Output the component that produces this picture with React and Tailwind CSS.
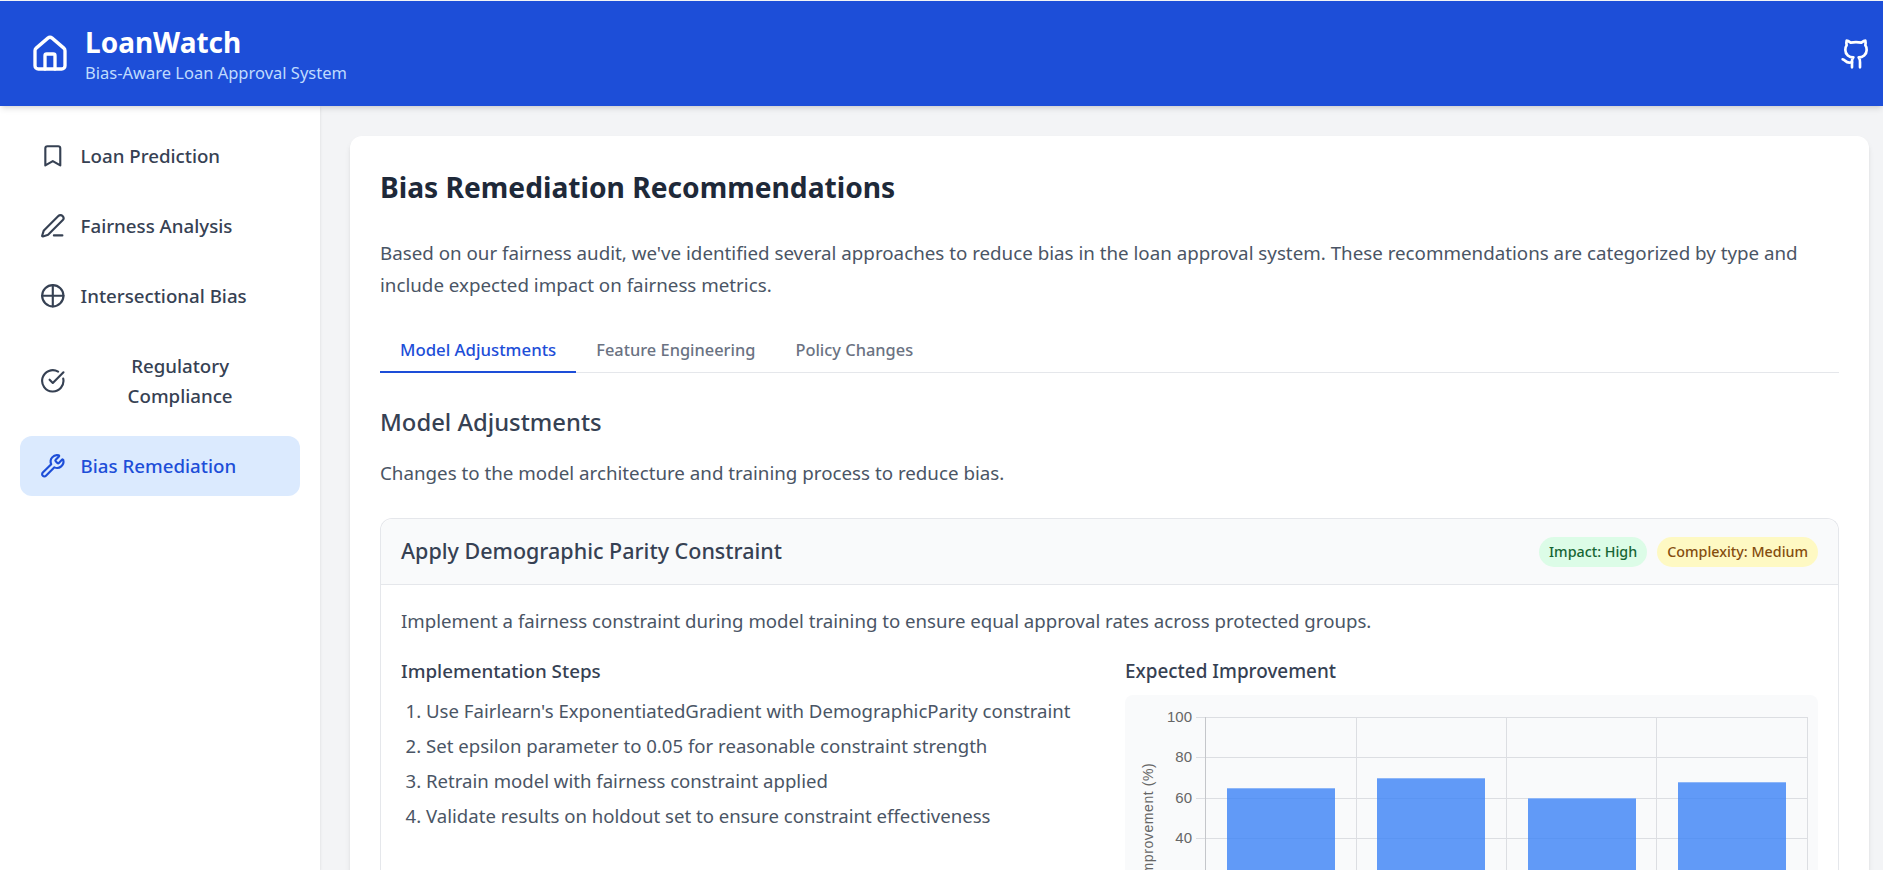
import React from 'react';
import { House, Github, Bookmark, PenLine, CircleCheckBig, Wrench } from 'lucide-react';

const navItems = [
  { label: 'Loan Prediction', icon: Bookmark },
  { label: 'Fairness Analysis', icon: PenLine },
  { label: 'Intersectional Bias', icon: CrossCircle },
  { label: 'Regulatory Compliance', icon: CircleCheckBig, wrap: true },
  { label: 'Bias Remediation', icon: Wrench, active: true },
];

const steps = [
  "Use Fairlearn's ExponentiatedGradient with DemographicParity constraint",
  'Set epsilon parameter to 0.05 for reasonable constraint strength',
  'Retrain model with fairness constraint applied',
  'Validate results on holdout set to ensure constraint effectiveness',
];

function CrossCircle({ size = 24, className }) {
  return (
    <svg width={size} height={size} viewBox="0 0 24 24" fill="none" stroke="currentColor" strokeWidth="2" strokeLinecap="round" strokeLinejoin="round" className={className}>
      <circle cx="12" cy="12" r="10" />
      <line x1="2" y1="12" x2="22" y2="12" />
      <line x1="12" y1="2" x2="12" y2="22" />
    </svg>
  );
}

function ImprovementChart() {
  const ticks = [
    { label: '100', y: 22 },
    { label: '80', y: 62 },
    { label: '60', y: 103 },
    { label: '40', y: 143 },
  ];
  const bars = [
    { x: 102, y: 93 },
    { x: 252, y: 83 },
    { x: 403, y: 103 },
    { x: 553, y: 87 },
  ];
  return (
    <svg width="693" height="240" viewBox="0 0 693 240" className="block">
      {ticks.map((t) => (
        <g key={t.label}>
          <line x1="71" x2="682" y1={t.y + 0.5} y2={t.y + 0.5} stroke="#dcdee2" />
          <text x="67" y={t.y + 5} textAnchor="end" fontSize="15" fill="#666" fontFamily="Liberation Sans, sans-serif">{t.label}</text>
        </g>
      ))}
      {[231, 381, 531, 682].map((x) => (
        <line key={x} x1={x + 0.5} x2={x + 0.5} y1="22" y2="224" stroke="#dcdee2" />
      ))}
      <line x1="80.5" x2="80.5" y1="22" y2="224" stroke="#c4c6ca" />
      {bars.map((b) => (
        <g key={b.x}>
          <rect x={b.x} y={b.y} width="108" height={224 - b.y} fill="#3b82f6" fillOpacity="0.8" />
          <rect x={b.x} y={b.y} width="108" height="1" fill="#8db6f8" />
        </g>
      ))}
      <text transform="translate(28 184) rotate(-90)" fontSize="14" fill="#666" letterSpacing="0.6" fontFamily="Liberation Sans, sans-serif">Improvement (%)</text>
    </svg>
  );
}

export default function App() {
  return (
    <div className="h-[870px] overflow-hidden bg-gray-100 font-['Noto_Sans',sans-serif] text-gray-700">
      <header className="relative z-10 mt-px flex h-[105px] items-center justify-between bg-[#1d4ed8] pl-[30px] pr-[11px] text-white shadow-md">
        <div className="flex items-center gap-[15px]">
          <House size={40} />
          <div>
            <h1 className="text-[28px] leading-[38px] font-bold">LoanWatch</h1>
            <p className="text-[16.5px] leading-[24px] text-[#bfdbfe]">Bias-Aware Loan Approval System</p>
          </div>
        </div>
        <Github size={32} />
      </header>

      <div className="flex">
        <aside className="flex h-[764px] w-[320px] shrink-0 flex-col gap-[10px] bg-white px-5 pt-[20px] shadow-sm">
          {navItems.map(({ label, icon: Icon, active, wrap }) => (
            <div
              key={label}
              className={`flex items-center gap-[15px] rounded-xl px-[20px] py-[15px] text-[18.7px] leading-[30px] font-medium ${active ? 'bg-[#dbeafe] text-[#1d4ed8]' : 'text-gray-700'}`}
            >
              <Icon size={25.6} className="shrink-0" strokeWidth={2} />
              {wrap ? (
                <span className="w-[199px] text-center">Regulatory<br />Compliance</span>
              ) : (
                <span>{label}</span>
              )}
            </div>
          ))}
        </aside>

        <main className="min-w-0 flex-1 pt-[30px] pl-[30px] pr-[14px]">
          <section className="rounded-t-xl bg-white px-[30px] pt-[30px] shadow-md">
            <h2 className="text-[28.2px] leading-[42px] font-bold text-gray-800">Bias Remediation Recommendations</h2>
            <p className="mt-[29px] text-[18.75px] leading-[32px] text-gray-600">
              Based on our fairness audit, we've identified several approaches to reduce bias in the loan approval system. These recommendations are categorized by type and include expected impact on fairness metrics.
            </p>

            <div className="mt-[31px] flex border-b border-gray-200 text-[16.4px] font-medium">
              <div className="-mb-px border-b-2 border-[#1d4ed8] px-5 pt-[3px] pb-[6px] text-[16.8px] leading-[30px] text-[#1d4ed8]">Model Adjustments</div>
              <div className="px-5 pt-[3px] pb-[6px] leading-[30px] text-gray-500">Feature Engineering</div>
              <div className="px-5 pt-[3px] pb-[6px] leading-[30px] text-gray-500">Policy Changes</div>
            </div>

            <h3 className="mt-[32px] text-[23.8px] leading-[34px] font-medium text-gray-700">Model Adjustments</h3>
            <p className="mt-[19px] text-[18.75px] leading-[30px] text-gray-600">Changes to the model architecture and training process to reduce bias.</p>

            <div className="mt-[30px] rounded-t-xl border border-b-0 border-gray-200">
              <div className="flex h-[66px] items-center justify-between rounded-t-xl border-b border-gray-200 bg-gray-50 px-5">
                <h4 className="text-[21.5px] font-medium text-gray-700">Apply Demographic Parity Constraint</h4>
                <div className="flex gap-[10px] text-[14.3px] font-medium">
                  <span className="rounded-full bg-[#dcfce7] px-[10px] py-[5px] leading-[20px] text-[#166534]">Impact: High</span>
                  <span className="rounded-full bg-[#fef9c3] px-[10px] py-[5px] leading-[20px] text-[#854d0e]">Complexity: Medium</span>
                </div>
              </div>

              <div className="px-5 pt-[21px]">
                <p className="text-[18.65px] leading-[30px] text-gray-600">Implement a fairness constraint during model training to ensure equal approval rates across protected groups.</p>
                <div className="mt-[20px] flex gap-[30px]">
                  <div className="w-[694px] shrink-0">
                    <h5 className="text-[18.8px] leading-[30px] font-medium text-gray-700">Implementation Steps</h5>
                    <ol className="mt-[7px] list-decimal pl-[25px] text-[18.6px] leading-[35px] text-gray-600">
                      {steps.map((step) => (
                        <li key={step}>{step}</li>
                      ))}
                    </ol>
                  </div>
                  <div className="min-w-0 flex-1">
                    <h5 className="text-[18.9px] leading-[30px] font-medium text-gray-700">Expected Improvement</h5>
                    <div className="mt-[9px] rounded-lg bg-gray-50">
                      <ImprovementChart />
                    </div>
                  </div>
                </div>
              </div>
            </div>
          </section>
        </main>
      </div>
    </div>
  );
}
